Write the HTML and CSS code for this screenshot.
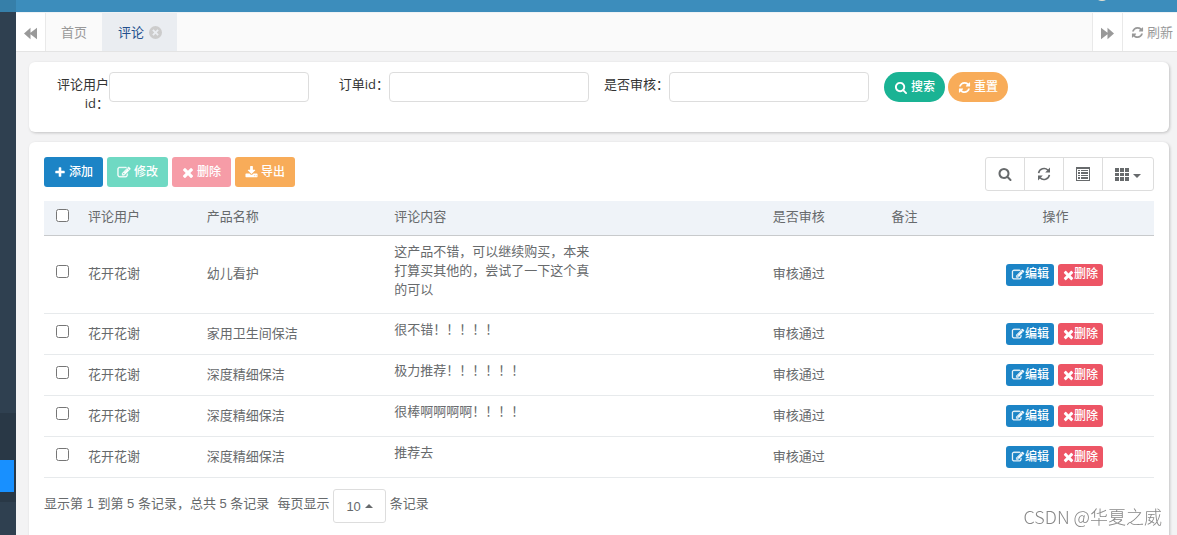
FILE: index.html
```html
<!DOCTYPE html>
<html lang="zh-CN">
<head>
<meta charset="utf-8">
<title>评论</title>
<link rel="stylesheet" href="styles.css">
</head>
<body>
<svg class="sprite" aria-hidden="true">
  <symbol id="search" viewBox="0 0 1792 1792"><path d="M1216 832q0-185-131.5-316.5t-316.5-131.5-316.5 131.5-131.5 316.5 131.5 316.5 316.5 131.5 316.5-131.5 131.5-316.5zm512 832q0 52-38 90t-90 38q-54 0-90-38l-343-342q-179 124-399 124-143 0-273.5-55.5t-225-150-150-225-55.5-273.5 55.5-273.5 150-225 225-150 273.5-55.5 273.5 55.5 225 150 150 225 55.5 273.5q0 220-124 399l343 343q37 37 37 90z"/></symbol>
  <symbol id="refresh" viewBox="0 0 1792 1792"><path d="M1639 1056q0 5-1 7-64 268-268 434.5t-478 166.5q-146 0-282.5-55t-243.5-157l-129 129q-19 19-45 19t-45-19-19-45v-448q0-26 19-45t45-19h448q26 0 45 19t19 45-19 45l-137 137q71 66 161 102t187 36q134 0 250-65t186-179q11-17 53-117 8-23 30-23h192q13 0 22.5 9.5t9.5 22.5zm25-800v448q0 26-19 45t-45 19h-448q-26 0-45-19t-19-45 19-45l138-138q-148-137-349-137-134 0-250 65t-186 179q-11 17-53 117-8 23-30 23h-199q-13 0-22.5-9.5t-9.5-22.5v-7q65-268 270-434.5t480-166.5q146 0 284 55.5t245 156.5l130-129q19-19 45-19t45 19 19 45z"/></symbol>
  <symbol id="plus" viewBox="0 0 1792 1792"><path d="M1600 736v192q0 40-28 68t-68 28h-416v416q0 40-28 68t-68 28h-192q-40 0-68-28t-28-68v-416h-416q-40 0-68-28t-28-68v-192q0-40 28-68t68-28h416v-416q0-40 28-68t68-28h192q40 0 68 28t28 68v416h416q40 0 68 28t28 68z"/></symbol>
  <symbol id="times" viewBox="192 128 1408 1536"><path d="M1490 1322q0 40-28 68l-136 136q-28 28-68 28t-68-28l-294-294-294 294q-28 28-68 28t-68-28l-136-136q-28-28-28-68t28-68l294-294-294-294q-28-28-28-68t28-68l136-136q28-28 68-28t68 28l294 294 294-294q28-28 68-28t68 28l136 136q28 28 28 68t-28 68l-294 294 294 294q28 28 28 68z"/></symbol>
  <symbol id="edit" viewBox="0 0 1792 1792"><path stroke="currentColor" stroke-width="50" d="M888 1184l116-116-152-152-116 116v56h96v96h56zm440-720q-16-16-33 1l-350 350q-17 17-1 33t33-1l350-350q17-17 1-33zm80 594v190q0 119-84.5 203.5t-203.5 84.5h-832q-119 0-203.5-84.5t-84.5-203.5v-832q0-119 84.5-203.5t203.5-84.5h832q63 0 117 25 15 7 18 23 3 17-9 29l-49 49q-14 14-32 8-23-6-45-6h-832q-66 0-113 47t-47 113v832q0 66 47 113t113 47h832q66 0 113-47t47-113v-126q0-13 9-22l64-64q15-15 35-7t20 29zm-96-738l288 288-672 672h-288v-288zm444 132l-92 92-288-288 92-92q28-28 68-28t68 28l152 152q28 28 28 68t-28 68z"/></symbol>
  <symbol id="download" viewBox="0 0 1792 1792"><path d="M1344 1344q0-26-19-45t-45-19-45 19-19 45 19 45 45 19 45-19 19-45zm256 0q0-26-19-45t-45-19-45 19-19 45 19 45 45 19 45-19 19-45zm128-224v320q0 40-28 68t-68 28h-1472q-40 0-68-28t-28-68v-320q0-40 28-68t68-28h465l135 136q58 56 136 56t136-56l136-136h464q40 0 68 28t28 68zm-325-569q17 41-14 70l-448 448q-18 19-45 19t-45-19l-448-448q-31-29-14-70 17-39 59-39h256v-448q0-26 19-45t45-19h256q26 0 45 19t19 45v448h256q42 0 59 39z"/></symbol>
  <symbol id="forward" viewBox="0 0 12 12"><path d="M0 0.6L6 5.4V0.6L12 6L6 11.4V6.6L0 11.4z"/></symbol>
  <symbol id="backward" viewBox="0 0 12 12"><path d="M12 0.6L6 5.4V0.6L0 6L6 11.4V6.6L12 11.4z"/></symbol>
  <symbol id="close" viewBox="0 0 12 12"><path fill-rule="evenodd" d="M6 0a6 6 0 1 0 0 12a6 6 0 1 0 0-12zM4.2 3L6 4.8L7.8 3L9 4.2L7.2 6L9 7.8L7.8 9L6 7.2L4.2 9L3 7.8L4.8 6L3 4.2z"/></symbol>
  <symbol id="reload" viewBox="0 0 14 14"><path d="M1.6 6.2A5.5 5.5 0 0 1 11 3.3M12.4 7.8A5.5 5.5 0 0 1 3 10.7" fill="none" stroke="currentColor" stroke-width="1.6"/><path d="M13 0.6V5.4H8.2zM1 13.4V8.6H5.8z"/></symbol>
  <symbol id="list" viewBox="0 0 14 14"><path fill-rule="evenodd" d="M0 0H14V14H0zM1 2V13H13V2zM2 3H4V4H2zM5 3H12V4H5zM2 5H4V7H2zM5 5H12V7H5zM2 8H4V9H2zM5 8H12V9H5zM2 10H4V12H2zM5 10H12V12H5z"/></symbol>
  <symbol id="grid" viewBox="0 0 14 14"><path d="M0 1H4V5H0zM5 1H9V5H5zM10 1H14V5H10zM0 6H4V9H0zM5 6H9V9H5zM10 6H14V9H10zM0 10H4V14H0zM5 10H9V14H5zM10 10H14V14H10z"/></symbol>
</svg>
<div class="app">
  <aside class="sidebar">
    <div class="logo"></div>
    <nav class="submenu" aria-label="菜单"><a class="current" href="#" aria-label="评论"></a></nav>
  </aside>
  <div class="main">
    <header class="topbar"><span class="avatar"></span></header>
    <div class="tabs">
      <button class="tab-btn roll-left" aria-label="向左"><svg class="icon"><use href="#backward"/></svg></button>
      <nav class="tab-list">
        <a class="tab" href="#">首页</a>
        <a class="tab active" href="#">评论<svg class="icon"><use href="#close"/></svg></a>
      </nav>
      <button class="tab-btn" aria-label="向右"><svg class="icon"><use href="#forward"/></svg></button>
      <button class="tab-btn tab-refresh"><svg class="icon"><use href="#refresh"/></svg>刷新</button>
    </div>
    <main class="content">
      <form class="card search">
        <div class="field"><label for="user">评论用户id：</label><input id="user" type="text"></div>
        <div class="field"><label for="order">订单id：</label><input id="order" type="text"></div>
        <div class="field"><label for="audit">是否审核：</label><input id="audit" type="text"></div>
        <div class="actions">
          <button type="button" class="btn round teal"><svg class="icon wide"><use href="#search"/></svg>搜索</button>
          <button type="button" class="btn round orange"><svg class="icon"><use href="#refresh"/></svg>重置</button>
        </div>
      </form>
      <section class="card list">
        <div class="toolbar">
          <div class="actions">
            <button class="btn blue"><svg class="icon slim"><use href="#plus"/></svg>添加</button>
            <button class="btn teal faded"><svg class="icon wide"><use href="#edit"/></svg>修改</button>
            <button class="btn red faded"><svg class="icon slim"><use href="#times"/></svg>删除</button>
            <button class="btn orange"><svg class="icon"><use href="#download"/></svg>导出</button>
          </div>
          <div class="tools">
            <button aria-label="搜索"><svg class="icon"><use href="#search"/></svg></button>
            <button aria-label="刷新"><svg class="icon"><use href="#reload"/></svg></button>
            <button aria-label="视图"><svg class="icon"><use href="#list"/></svg></button>
            <button aria-label="列"><svg class="icon"><use href="#grid"/></svg><span class="caret"></span></button>
          </div>
        </div>
        <table>
          <colgroup><col class="c-check"><col class="c-user"><col class="c-product"><col class="c-comment"><col class="c-audit"><col class="c-note"><col class="c-ops"></colgroup>
          <thead>
            <tr><th class="check"><input type="checkbox" aria-label="全选"></th><th>评论用户</th><th>产品名称</th><th>评论内容</th><th>是否审核</th><th>备注</th><th class="ops">操作</th></tr>
          </thead>
          <tbody>
            <tr><td class="check"><input type="checkbox" aria-label="选择"></td><td>花开花谢</td><td>幼儿看护</td><td class="comment"><p>这产品不错，可以继续购买，本来打算买其他的，尝试了一下这个真的可以</p></td><td>审核通过</td><td></td><td class="ops"><button class="btn mini blue"><svg class="icon"><use href="#edit"/></svg>编辑</button><button class="btn mini red"><svg class="icon"><use href="#times"/></svg>删除</button></td></tr>
            <tr><td class="check"><input type="checkbox" aria-label="选择"></td><td>花开花谢</td><td>家用卫生间保洁</td><td class="comment"><p>很不错！！！！！</p></td><td>审核通过</td><td></td><td class="ops"><button class="btn mini blue"><svg class="icon"><use href="#edit"/></svg>编辑</button><button class="btn mini red"><svg class="icon"><use href="#times"/></svg>删除</button></td></tr>
            <tr><td class="check"><input type="checkbox" aria-label="选择"></td><td>花开花谢</td><td>深度精细保洁</td><td class="comment"><p>极力推荐！！！！！！</p></td><td>审核通过</td><td></td><td class="ops"><button class="btn mini blue"><svg class="icon"><use href="#edit"/></svg>编辑</button><button class="btn mini red"><svg class="icon"><use href="#times"/></svg>删除</button></td></tr>
            <tr><td class="check"><input type="checkbox" aria-label="选择"></td><td>花开花谢</td><td>深度精细保洁</td><td class="comment"><p>很棒啊啊啊啊！！！！</p></td><td>审核通过</td><td></td><td class="ops"><button class="btn mini blue"><svg class="icon"><use href="#edit"/></svg>编辑</button><button class="btn mini red"><svg class="icon"><use href="#times"/></svg>删除</button></td></tr>
            <tr><td class="check"><input type="checkbox" aria-label="选择"></td><td>花开花谢</td><td>深度精细保洁</td><td class="comment"><p>推荐去</p></td><td>审核通过</td><td></td><td class="ops"><button class="btn mini blue"><svg class="icon"><use href="#edit"/></svg>编辑</button><button class="btn mini red"><svg class="icon"><use href="#times"/></svg>删除</button></td></tr>
          </tbody>
        </table>
        <div class="pager">
          <span class="total">显示第 1 到第 5 条记录，总共 5 条记录</span>
          <span>每页显示</span>
          <button class="page-size">10<span class="caret up"></span></button>
          <span>条记录</span>
        </div>
      </section>
    </main>
  </div>
</div>
<div class="watermark">CSDN @华夏之威</div>
</body>
</html>
```
FILE: styles.css
```css
* { box-sizing: border-box; }

body {
  margin: 0;
  overflow: hidden;
  background: #f3f3f4;
  color: #676a6c;
  font: 13px/19px "Liberation Sans", "Noto Sans CJK SC", sans-serif;
}

button, input { font: inherit; color: inherit; margin: 0; }
button { cursor: pointer; }
a { color: inherit; text-decoration: none; }

.sprite { display: none; }
.icon { width: 13px; height: 13px; fill: currentColor; flex: none; }

.app { display: flex; height: 100vh; }

/* sidebar */
.sidebar { flex: none; width: 16px; background: #2f4050; }
.logo { height: 12px; margin-bottom: 401px; background: #367fa9; }
.submenu { padding: 47px 2px 10px 0; background: #293846; }
.current { display: block; height: 32px; background: #1890ff; }

.main { flex: 1; min-width: 0; display: flex; flex-direction: column; }
.topbar { position: relative; flex: none; height: 12px; background: #3c8dbc; }
.avatar {
  position: absolute;
  right: 67px;
  top: -15px;
  width: 16px;
  height: 16px;
  border-radius: 50%;
  background: #e6e3d3;
}

/* tabs */
.tabs {
  flex: none;
  display: flex;
  height: 40px;
  background: #fafafa;
  border-top: 1px solid #eef2f5;
  border-bottom: 1px solid #e4e4e4;
  color: #999;
}
.tab-btn {
  display: flex;
  align-items: center;
  justify-content: center;
  gap: 3px;
  width: 30px;
  padding: 2px 0 0;
  border: 0;
  border-left: 1px solid #e9e9e9;
  background: #fff;
}
.roll-left { border-left: 0; border-right: 1px solid #e9e9e9; }
.tab-refresh { width: 55px; padding: 0 0 0 4px; }
.tab-list { flex: 1; display: flex; }
.tab { display: flex; align-items: center; gap: 5px; padding: 0 15px; }
.tab.active { padding-left: 16px; background: #eaedf1; color: #23508e; }
.tab .icon { color: #ccc; }

/* cards */
.content {
  flex: 1;
  min-height: 0;
  display: flex;
  flex-direction: column;
  gap: 10px;
  padding: 10px 8px 0 13px;
}
.card {
  background: #fff;
  border-radius: 6px;
  box-shadow: 1px 1px 3px rgba(0, 0, 0, 0.2);
}

.search {
  flex: none;
  display: flex;
  align-items: flex-start;
  gap: 15px;
  padding: 10px 15px 19px;
  color: #333;
}
.field { display: flex; align-items: flex-start; }
.field label {
  width: 65px;
  padding-top: 3px;
  text-align: right;
  font-family: "Open Sans", "Noto Sans CJK SC", sans-serif;
}
.field input {
  width: 200px;
  height: 30px;
  padding: 0 8px;
  border: 1px solid #ddd;
  border-radius: 4px;
  background: #fff;
}

.actions { display: flex; gap: 3px; }
.toolbar .actions { gap: 4px; }
.btn {
  display: inline-flex;
  align-items: center;
  gap: 3px;
  height: 30px;
  padding: 0 10px;
  border: 0;
  border-radius: 3px;
  color: #fff;
  font-size: 12px;
  font-weight: 500;
}
.btn .slim { width: 12px; }
.btn .wide { width: 14px; }
.round { border-radius: 15px; }
.teal { background: #1ab394; }
.orange { background: #f8ac59; }
.blue { background: #1c84c6; }
.red { background: #ed5565; }
.teal.faded { background: #6fd9c3; }
.red.faded { background: #f69ca7; }

/* the list card runs on below the window edge */
.list { flex: 1 0 auto; margin-bottom: -10px; padding: 15px 15px 0; }
.toolbar { display: flex; justify-content: space-between; margin-bottom: 10px; }
.tools { display: flex; border: 1px solid #ddd; border-radius: 3px; }
.tools button {
  display: flex;
  align-items: center;
  gap: 4px;
  height: 32px;
  padding: 0 12px;
  border: 0;
  border-left: 1px solid #ddd;
  background: none;
}
.tools button:first-child { border-left: 0; }
.tools .icon { width: 14px; height: 14px; }
.caret {
  border: 4px solid transparent;
  border-top-color: currentColor;
  border-bottom: 0;
}
.tools .caret { margin-top: 4px; }
.caret.up {
  border-top: 0;
  border-bottom: 4px solid currentColor;
}

/* table */
table { width: 100%; table-layout: fixed; border-collapse: separate; border-spacing: 0; }
.c-check { width: 36px; }
.c-user, .c-audit { width: 10.7%; }
.c-product { width: 16.9%; }
.c-comment { width: 34.1%; }
.c-note { width: 6.6%; }
th {
  height: 35px;
  padding: 0 8px 3px;
  background: #eff3f8;
  border-bottom: 1px solid #c8cacc;
  text-align: left;
  font-weight: 400;
}
td { height: 41px; padding: 0 8px 2px; border-bottom: 1px solid #e7eaec; }
.check { padding: 0 0 2px; text-align: center; }
.check input { display: block; width: 13px; height: 13px; margin: 0 auto 4px 12px; }
td.comment { padding: 6px 8px 14px; vertical-align: top; }
.comment p { width: 200px; margin: 0; }
.ops { text-align: center; }
td.ops { padding: 0 10px 0 8px; }
.mini { height: 22px; gap: 0; padding: 0 5px; }
.mini.blue { margin-right: 4px; }
.mini.blue .icon { width: 14px; }
.mini .icon { width: 11px; height: 12px; }

.pager { display: flex; align-items: center; gap: 4px; padding-top: 11px; }
.pager > span { padding-bottom: 5px; }
.pager .total { margin-right: 4px; }
.page-size {
  display: flex;
  align-items: center;
  gap: 4px;
  height: 34px;
  padding: 0 12px;
  border: 1px solid #ddd;
  border-radius: 3px;
  background: #fff;
}

.watermark {
  position: fixed;
  right: 15px;
  bottom: 7px;
  color: #888;
  font: 300 18px/24px "Noto Sans CJK SC", sans-serif;
}
```
